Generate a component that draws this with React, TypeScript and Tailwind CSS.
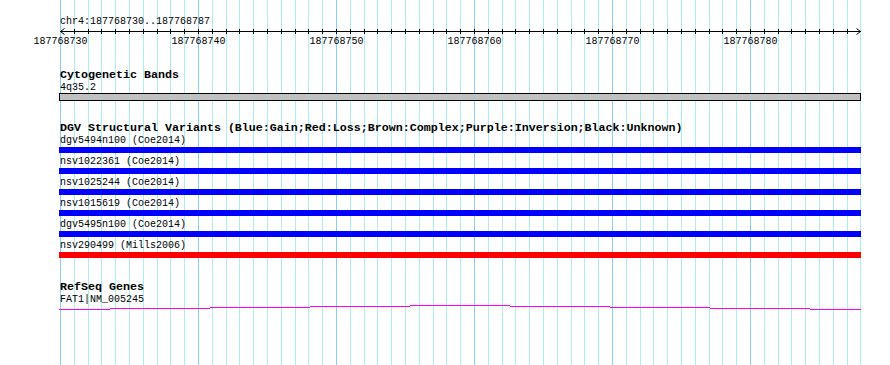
import React from "react";

const cols = Array.from({ length: 59 }, (_, i) => Math.round(60 + 13.8 * i));

const variants: { label: string; color: string }[] = [
  { label: "dgv5494n100 (Coe2014)", color: "bg-[#0000ff]" },
  { label: "nsv1022361 (Coe2014)", color: "bg-[#0000ff]" },
  { label: "nsv1025244 (Coe2014)", color: "bg-[#0000ff]" },
  { label: "nsv1015619 (Coe2014)", color: "bg-[#0000ff]" },
  { label: "dgv5495n100 (Coe2014)", color: "bg-[#0000ff]" },
  { label: "nsv290499 (Mills2006)", color: "bg-[#ff0000]" },
];

const geneSegs: [number, number, number][] = [
  [59, 110, 309],
  [110, 210, 308],
  [210, 310, 307],
  [310, 410, 306],
  [410, 510, 305],
  [510, 610, 306],
  [610, 710, 307],
  [710, 810, 308],
  [810, 861, 309],
];

const labels = [0, 10, 20, 30, 40, 50];

function Grid() {
  return (
    <svg
      className="absolute left-0 top-0"
      width={890}
      height={365}
      shapeRendering="crispEdges"
    >
      {cols.map((c, i) => (
        <line
          key={i}
          x1={c + 0.5}
          x2={c + 0.5}
          y1={0}
          y2={365}
          stroke={i % 10 === 0 ? "#87cefa" : "#afeeee"}
          strokeWidth={1}
        />
      ))}
    </svg>
  );
}

function Axis() {
  return (
    <svg width={890} height={22} className="block" shapeRendering="crispEdges">
      <line x1={60} x2={861} y1={3.5} y2={3.5} stroke="#000" strokeWidth={1} />
      {cols.slice(1, 58).map((c, i) => (
        <line key={i} x1={c + 0.5} x2={c + 0.5} y1={1} y2={6} stroke="#000" strokeWidth={1} />
      ))}
      <polyline points="64.5,0.5 60.5,3.5 64.5,6.5" fill="none" stroke="#000" strokeWidth={1} shapeRendering="auto" />
      <polyline points="856.5,0.5 860.5,3.5 856.5,6.5" fill="none" stroke="#000" strokeWidth={1} shapeRendering="auto" />
      {labels.map((l) => (
        <text
          key={l}
          x={cols[l] + 0.5}
          y={16}
          textAnchor="middle"
          fontSize={10}
          fontFamily="'Liberation Mono', 'DejaVu Sans Mono', monospace"
          fill="#000"
        >
          {187768730 + l}
        </text>
      ))}
    </svg>
  );
}

function Gene() {
  return (
    <svg width={890} height={8} className="block" shapeRendering="crispEdges">
      {geneSegs.map(([x1, x2, y], i) => (
        <line key={i} x1={x1} x2={x2} y1={y - 305 + 0.5} y2={y - 305 + 0.5} stroke="#ff00ff" strokeWidth={1} />
      ))}
    </svg>
  );
}

const small = "pl-[60px] text-[10px] leading-[11px] whitespace-pre";
const bold = "pl-[60px] text-[11.67px] leading-[11px] font-bold whitespace-pre";

export default function App() {
  return (
    <div className="relative h-[365px] w-[890px] overflow-hidden bg-white text-black font-['Liberation_Mono','DejaVu_Sans_Mono',monospace]">
      <Grid />
      <div className="relative flex flex-col">
        <div className="pt-[16px] pl-[60px] text-[10px] leading-[12px] whitespace-pre">
          chr4:187768730..187768787
        </div>
        <Axis />
        <div className={`mt-[20px] ${bold}`}>Cytogenetic Bands</div>
        <div className={`mt-[1px] ${small}`}>4q35.2</div>
        <div className="ml-[59px] h-[8px] w-[802px] border border-black bg-[#c0c0c0]" />
        <div className={`mt-[22px] ${bold}`}>
          DGV Structural Variants (Blue:Gain;Red:Loss;Brown:Complex;Purple:Inversion;Black:Unknown)
        </div>
        {variants.map((v, i) => (
          <div key={v.label} className={i === 0 ? "mt-[1px]" : "mt-[3px]"}>
            <div className={small}>{v.label}</div>
            <div className={`ml-[59px] mt-[1px] h-[6px] w-[802px] ${v.color}`} />
          </div>
        ))}
        <div className={`mt-[24px] ${bold}`}>RefSeq Genes</div>
        <div className={`mt-[1px] ${small}`}>FAT1|NM_005245</div>
        <Gene />
      </div>
    </div>
  );
}
